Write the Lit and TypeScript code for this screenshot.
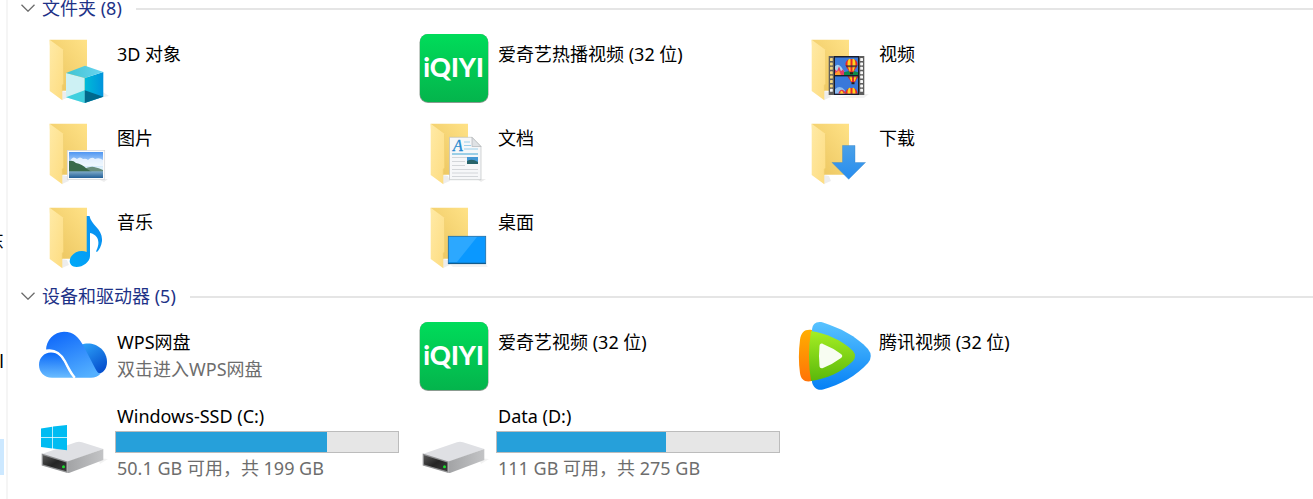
import { LitElement, html, css, svg, nothing } from "lit";
import { customElement, property, state } from "lit/decorators.js";

type Entry = { name: string; icon: string; note?: string; used?: number };

const folders: Entry[] = [
  { name: "3D 对象", icon: "cube" },
  { name: "爱奇艺热播视频 (32 位)", icon: "iqiyi" },
  { name: "视频", icon: "film" },
  { name: "图片", icon: "picture" },
  { name: "文档", icon: "document" },
  { name: "下载", icon: "download" },
  { name: "音乐", icon: "music" },
  { name: "桌面", icon: "desktop" },
];

const devices: Entry[] = [
  { name: "WPS网盘", icon: "wps", note: "双击进入WPS网盘" },
  { name: "爱奇艺视频 (32 位)", icon: "iqiyi" },
  { name: "腾讯视频 (32 位)", icon: "tencent" },
  { name: "Windows-SSD (C:)", icon: "system", note: "50.1 GB 可用，共 199 GB", used: 74.8 },
  { name: "Data (D:)", icon: "disk", note: "111 GB 可用，共 275 GB", used: 59.8 },
];

const folder = svg`
  <defs>
    <linearGradient id="back" x1="0" y1="1" x2="1" y2="0"><stop offset="0" stop-color="#eac35c"/><stop offset="1" stop-color="#ffe287"/></linearGradient>
    <linearGradient id="front" x1="0" y1="0" x2="1" y2="1"><stop offset="0" stop-color="#ffeaa6"/><stop offset="1" stop-color="#fddc80"/></linearGradient>
  </defs>
  <path d="M24 68L31 65L29 60L24 59z" fill="#00000012"/>
  <path d="M11.700 7.700H49V58.700H14z" fill="url(#back)"/>
  <path d="M11.700 7.700L25.700 18V51.500L24.300 53.500V68.300L11.700 59z" fill="url(#front)"/>
  <path d="M25.500 18V51.500L24.300 53.500V58.700" fill="none" stroke="#efcd6c" stroke-width=".6"/>`;

const balloon = svg`
  <path d="M-6 -1C-6 -8 6 -8 6 -1C6 2 3 4 2 7H-2C-3 4 -6 2 -6 -1z" fill="#e8262a"/>
  <path d="M-4 -1C-4 -7 -1 -7 -1 -6V6H-2C-3 2 -4 2 -4 -1zM4 -1C4 -7 1 -7 1 -6V6H2C3 2 4 2 4 -1z" fill="#ffd21e"/>
  <path d="M-6 0H6L5 2H-5z" fill="#3b2a3c" opacity=".8"/>
  <rect x="-1.500" y="7" width="3" height="2" fill="#2b1b12"/>`;

const holes = [26, 30.4, 34.8, 39.2, 43.6, 48, 52.4, 56.8];

const disk = svg`
  <defs>
    <linearGradient id="dside" x1="0" y1="0" x2="1" y2="0"><stop offset="0" stop-color="#a2a3a5"/><stop offset="1" stop-color="#c3c4c6"/></linearGradient>
    <linearGradient id="dfront" x1="0" y1="0" x2="1" y2="1"><stop offset="0" stop-color="#565656"/><stop offset=".5" stop-color="#252525"/><stop offset="1" stop-color="#3b3b3b"/></linearGradient>
  </defs>
  <path d="M60 54L70 55L62 60z" fill="#0000000d"/>
  <path d="M3.700 50L38 38.300Q41 37.300 44 38.300L65.300 45L29.500 58z" fill="#dfe0e4"/>
  <path d="M29.500 57.500L65.300 45V56L31 69H29.500z" fill="url(#dside)"/>
  <path d="M3.700 49.500L29.500 57.500V69L3.700 61.500z" fill="#8f9092"/>
  <path d="M5 51.300L28.300 58.600V67.200L5 60.500z" fill="url(#dfront)"/>
  <circle cx="25.500" cy="62.700" r="1.500" fill="#19e02b"/>`;

const icons: Record<string, unknown> = {
  cube: svg`${folder}
    <defs>
      <linearGradient id="cr"><stop offset="0" stop-color="#00bcd8"/><stop offset="1" stop-color="#0093dc"/></linearGradient>
      <linearGradient id="ct"><stop offset="0" stop-color="#41c4d0"/><stop offset="1" stop-color="#69d4f2"/></linearGradient>
    </defs>
    <path d="M62 66L71 64L65 60z" fill="#00000010"/>
    <path d="M28 41L46.700 46V71L28 65.300z" fill="#cdf1f4"/>
    <path d="M46.700 46L65.300 40V64.700L46.700 71z" fill="url(#cr)"/>
    <path d="M28 41L47 33.700L65.300 40L46.700 46z" fill="url(#ct)"/>
    <path d="M28 65.300L46.700 58.300V71z" fill="#3fd0df"/>
    <path d="M46.700 58.300L65.300 64.700L46.700 71z" fill="#00698c"/>`,
  iqiyi: svg`
    <defs><linearGradient id="iq" x1="0" y1="0" x2="0" y2="1"><stop offset="0" stop-color="#00dc5a"/><stop offset="1" stop-color="#04b44c"/></linearGradient></defs>
    <rect x=".5" y="2" width="69" height="69" rx="8.500" fill="#8b9b90"/>
    <rect x="1" y="2" width="68" height="68" rx="8" fill="url(#iq)"/>
    <text class="brand" x="34.500" y="45" text-anchor="middle">iQIYI</text>`,
  film: svg`${folder}
    <path d="M62 62L69 62L64 66H34z" fill="#0000000e"/>
    <rect x="28.700" y="24" width="35.600" height="39" fill="#5d5d5d"/>
    ${holes.map((y) => svg`<rect x="30" y=${y} width="2.800" height="3" rx=".6" fill=${y > 55 ? "#f4f4f4" : "#f0d47e"}/><rect x="60.200" y=${y} width="2.800" height="3" rx=".6" fill="#f7f7f7"/>`)}
    <rect x="34" y="24" width="25" height="39" fill="#191d2b"/>
    <svg x="35" y="25.300" width="23" height="17.700" viewBox="0 0 23 17.700">
      <rect width="23" height="18" fill="#3d7bdb"/>
      <path d="M0 9Q4 4 9 14V18H0z" fill="#a6d0ef"/>
      <path d="M0 12L2 14L4 9L6 14L8 12L11 18H0z" fill="#e23c66"/><path d="M0 16L4 13L6 18H0z" fill="#ff9e2c"/>
      <path d="M9 15Q17 12 23 15V18H9z" fill="#0e8a4a"/>
      <g transform="translate(16.500 8)">${balloon}</g>
    </svg>
    <svg x="35" y="44.200" width="23" height="17.300" viewBox="0 0 23 17.300">
      <rect width="23" height="18" fill="#3978da"/>
      <path d="M0 13Q5 8 10 14V18H0z" fill="#8dbcf0"/>
      <g transform="translate(18 -1)">${balloon}</g><g transform="translate(16.500 18)">${balloon}</g>
      <path d="M3 18Q6 9 12 18z" fill="#df3947"/><path d="M5 18Q6 11 9 18z" fill="#ffd21e"/>
    </svg>`,
  picture: svg`${folder}
    <defs>
      <linearGradient id="sky" x1="0" y1="0" x2="0" y2="1"><stop offset="0" stop-color="#4f96f2"/><stop offset=".6" stop-color="#e0f2fd"/></linearGradient>
      <linearGradient id="sea" x1="0" y1="0" x2="0" y2="1"><stop offset="0" stop-color="#7fabc9"/><stop offset="1" stop-color="#235f97"/></linearGradient>
    </defs>
    <path d="M60 63H70L66 66z" fill="#00000012"/>
    <rect x="29.300" y="34.500" width="37.400" height="29" fill="#fbfbfb" stroke="#d3d5d8" stroke-width=".7"/>
    <rect x="31" y="36" width="34" height="26" fill="url(#sky)"/>
    <path d="M32 45Q35 39 39 43Q42 40 45 43Q48 42 50 44Q54 40 57 43Q61 41 65 44V50H31z" fill="#f7fbff" opacity=".8"/>
    <path d="M44 54Q52 50 56 51Q61 52 65 54V56H42z" fill="#698d7c"/>
    <path d="M31 45Q35 44 38 47Q44 48 49 53L54 56H31z" fill="#3a6a4b"/>
    <rect x="31" y="55.300" width="34" height="6.700" fill="url(#sea)"/>`,
  document: svg`${folder}
    <path d="M58 63H67L62 66z" fill="#00000014"/>
    <path d="M30.500 21.300H53L62 30.500V63.700H30.500z" fill="#f6f7f9" stroke="#b5b8bb" stroke-width=".6"/>
    <path d="M53 21.300V30.500H62z" fill="#dfe2e5" stroke="#a9acaf" stroke-width=".6"/>
    <text class="letter" x="34" y="35">A</text>
    <path d="M45 26H51M45 29.500H52M45 33H59" stroke="#9bd0ea"/>
    <path d="M33 38H59" stroke="#91c9e4" stroke-width="1.800"/>
    <path d="M33 41.500H59M33 45.500H46M33 49.500H46M33 53.500H59M33 57H59M33 60.500H59" stroke="#d3d6da"/>
    <rect x="48" y="41" width="11" height="7" fill="#4598d4"/><path d="M48 45Q53 42 59 46V48H48z" fill="#27636a"/>`,
  download: svg`${folder}
    <defs><linearGradient id="dl" x1="0" y1="0" x2="0" y2="1"><stop offset="0" stop-color="#4aa0e8"/><stop offset="1" stop-color="#278def"/></linearGradient></defs>
    <path d="M42.500 29.500H55V46.500H65.500L48.700 63.300L32 46.500H42.500z" fill="url(#dl)" stroke="#3b86c6" stroke-width=".4"/>`,
  music: svg`${folder}
    <defs><linearGradient id="mu" x1="0" y1="1" x2="1" y2="0"><stop offset="0" stop-color="#00a9f8"/><stop offset="1" stop-color="#0a8cf0"/></linearGradient></defs>
    <path d="M48.700 16H51.500C53 25 65 29 64 41C63.500 46 61 50 59 52C58 52 58 51 58.600 50C62 43 61 35 52 33V56C52 62 45 67 38.500 67C34 67 31.500 64 31.700 61C32 54 41 49 48.700 52z" fill="url(#mu)"/>`,
  desktop: svg`${folder}
    <path d="M30 64H67L69 67H34z" fill="#0000000c"/>
    <rect x="29.300" y="36.300" width="37.400" height="27.400" fill="#0a98ff" stroke="#216ea6" stroke-width=".8"/>
    <path d="M30 37H58L38 62H30z" fill="#2ca8ff"/>
    <path d="M29.300 63.300H66.700" stroke="#125b8d" stroke-width="1.200"/>`,
  wps: svg`
    <defs>
      <linearGradient id="wa" x1=".2" y1="0" x2=".7" y2="1"><stop offset="0" stop-color="#0f68fa"/><stop offset="1" stop-color="#54b0ff"/></linearGradient>
      <linearGradient id="wb" x1="0" y1="0" x2="0" y2="1"><stop offset="0" stop-color="#0b69f8"/><stop offset="1" stop-color="#69bcff"/></linearGradient>
      <linearGradient id="wc" x1="0" y1="0" x2=".6" y2="1"><stop offset="0" stop-color="#2fa5fa"/><stop offset="1" stop-color="#0752cf"/></linearGradient>
    </defs>
    <path d="M43 25C54 20 69 28 69 42C69 48 66 52 62 53.500H55z" fill="url(#wc)"/>
    <path d="M8 30.500C8 20 16 11.700 26 11.700C36 11.700 41 18 45 25L57 48Q59.500 53.500 62.500 53.700C60 56.500 57 57.700 53 57.700H37L27 41C22 32 16 29 8 30.500z" fill="url(#wa)"/>
    <path d="M1 45C1 38 6 32.500 13 32.500C20 32.500 23 37 26 42C29 48 31 53 35.300 57.700H14C6 57.700 1 52 1 45z" fill="url(#wb)"/>
    <path d="M8 30.500C16 29 22 32 27 41C30 47 33 53 37 57.700" fill="none" stroke="#fff" stroke-width="1.800"/>`,
  tencent: svg`
    <defs>
      <linearGradient id="tb" x1="0" y1="0" x2="0" y2="1"><stop offset="0" stop-color="#59c3ff"/><stop offset="1" stop-color="#0580f5"/></linearGradient>
      <linearGradient id="to" x1="0" y1="0" x2="0" y2="1"><stop offset="0" stop-color="#ffae00"/><stop offset="1" stop-color="#ff7307"/></linearGradient>
      <linearGradient id="tg" x1="0" y1="0" x2="0" y2="1"><stop offset="0" stop-color="#a6ee23"/><stop offset="1" stop-color="#5ab80b"/></linearGradient>
    </defs>
    <path d="M12 10C12.500 4 16 1 23 2.500C40 8 56 16 68 29Q73.500 36 68 43C56 56 40 65 23 69.500C17 71 13 67 12 62z" fill="url(#tb)"/>
    <path d="M12 10C5 9 1 12 0 20C-1.500 31 -1.500 43 0 53C1 60 5 62.500 12 61z" fill="url(#to)"/>
    <path d="M11 11C25 13 42 20 53 31Q57 36 53 41C42 52 26 59 11 61Q7 36 11 11z" fill="url(#tg)"/>
    <path d="M19.500 26C19.700 24 21 23 23 24Q33 28 41 34Q43.500 36 41 38Q33 44 23 48C21 48.500 19.700 48 19.500 46Q18.500 36 19.500 26z" fill="#f8fdf2"/>`,
  disk,
  system: svg`${disk}
    <path d="M3 24.500L14.300 22.700V33.200H3zM15 22.600L29 21V33.200H15zM3 34H14.300V44.500L3 43zM15 34H29V46.300L15 44.600z" fill="#00bcf2"/>`,
};

@customElement("drive-meter")
class DriveMeter extends LitElement {
  @property({ type: Number }) value = 0;

  static styles = css`
    :host { display: block; }
    .track {
      box-sizing: border-box;
      height: 22px;
      border: 1px solid #bcbcbc;
      background: #e6e6e6;
    }
    .fill { height: 100%; background: #26a0da; }
  `;

  render() {
    return html`<div class="track" role="meter" aria-label="已用空间" aria-valuenow=${this.value}>
      <div class="fill" style="width:${this.value}%"></div>
    </div>`;
  }
}

@customElement("entry-tile")
class EntryTile extends LitElement {
  @property({ attribute: false }) entry!: Entry;

  static styles = css`
    :host { display: block; }
    .tile {
      display: flex;
      gap: 5px;
      box-sizing: border-box;
      min-height: 84px;
      padding: 6px 20px 6px 0;
      color: #000;
      text-decoration: none;
    }
    .icon { flex: none; width: 72px; height: 72px; overflow: visible; }
    .info {
      flex: 1;
      display: flex;
      flex-direction: column;
      gap: 3px;
      min-width: 0;
      padding-top: 10px;
    }
    .drive .info { padding-top: 0; }
    .text { padding-left: 2px; line-height: 24px; white-space: nowrap; }
    .note { color: #6d6d6d; }
    .brand { font: 900 26px Lato, sans-serif; fill: #fff; }
    .letter { font: italic 400 16px "Liberation Serif", serif; fill: #2388cf; stroke: #2388cf; stroke-width: 0.3; }
  `;

  render() {
    const { name, icon, note, used } = this.entry;
    return html`<a class="tile ${used === undefined ? "" : "drive"}" href="#">
      <svg class="icon" viewBox="0 0 72 72" aria-hidden="true">${icons[icon]}</svg>
      <span class="info">
        <span class="text">${name}</span>
        ${used === undefined ? nothing : html`<drive-meter .value=${used}></drive-meter>`}
        ${note ? html`<span class="text note">${note}</span>` : nothing}
      </span>
    </a>`;
  }
}

@customElement("entry-group")
class EntryGroup extends LitElement {
  @property() heading = "";
  @property({ attribute: false }) entries: Entry[] = [];
  @state() private open = true;

  static styles = css`
    :host { display: block; }
    .head {
      display: flex;
      align-items: center;
      gap: 7px;
      width: 100%;
      height: 24px;
      padding: 0;
      border: 0;
      background: none;
      color: #1e3287;
      font: inherit;
      line-height: 22px;
      text-align: left;
    }
    .title { padding-bottom: 2px; }
    .chevron { width: 14px; height: 8px; padding-bottom: 2px; fill: none; stroke: #6b6b6b; stroke-width: 1.3; }
    .rule { flex: 1; height: 2px; margin-left: 7px; background: #e5e5e5; }
    .grid {
      display: grid;
      grid-template-columns: repeat(auto-fill, 381px);
      margin: 0;
      padding: 5px 0 7px 17px;
      list-style: none;
    }
  `;

  render() {
    return html`
      <button class="head" aria-expanded=${this.open} @click=${() => (this.open = !this.open)}>
        <svg class="chevron" viewBox="0 0 14 8" aria-hidden="true"><path d="M.5 .7L7 7.200L13.500 .7"/></svg>
        <span class="title">${this.heading}</span>
        <span class="rule"></span>
      </button>
      ${this.open
        ? html`<ul class="grid">${this.entries.map((e) => html`<li><entry-tile .entry=${e}></entry-tile></li>`)}</ul>`
        : nothing}`;
  }
}

@customElement("app-root")
class AppRoot extends LitElement {
  static styles = css`
    :host {
      display: flex;
      height: 100vh;
      overflow: hidden;
      background: #fff;
      font: 18px/24px "Noto Sans", "Noto Sans CJK SC", sans-serif;
    }
    .side {
      flex: none;
      display: flex;
      flex-direction: column;
      justify-content: flex-end;
      box-sizing: border-box;
      width: 8px;
      padding: 0 2px 24px 0;
      border-right: 2px solid #f5f5f5;
    }
    .node {
      display: flex;
      align-items: center;
      justify-content: flex-end;
      width: 4px;
      height: 36px;
      margin-top: 60px;
      overflow: hidden;
      color: #000;
      text-decoration: none;
    }
    .node + .node { margin-top: 84px; }
    .node.selected { margin-top: 60px; background: #cce8ff; }
    .main { flex: 1; min-width: 0; margin-top: -3px; padding-left: 13px; }
  `;

  render() {
    return html`
      <nav class="side">
        <a class="node" href="#">东</a>
        <a class="node" href="#">al</a>
        <a class="node selected" href="#" aria-current="page"></a>
      </nav>
      <main class="main">
        <entry-group heading="文件夹 (8)" .entries=${folders}></entry-group>
        <entry-group heading="设备和驱动器 (5)" .entries=${devices}></entry-group>
      </main>`;
  }
}
